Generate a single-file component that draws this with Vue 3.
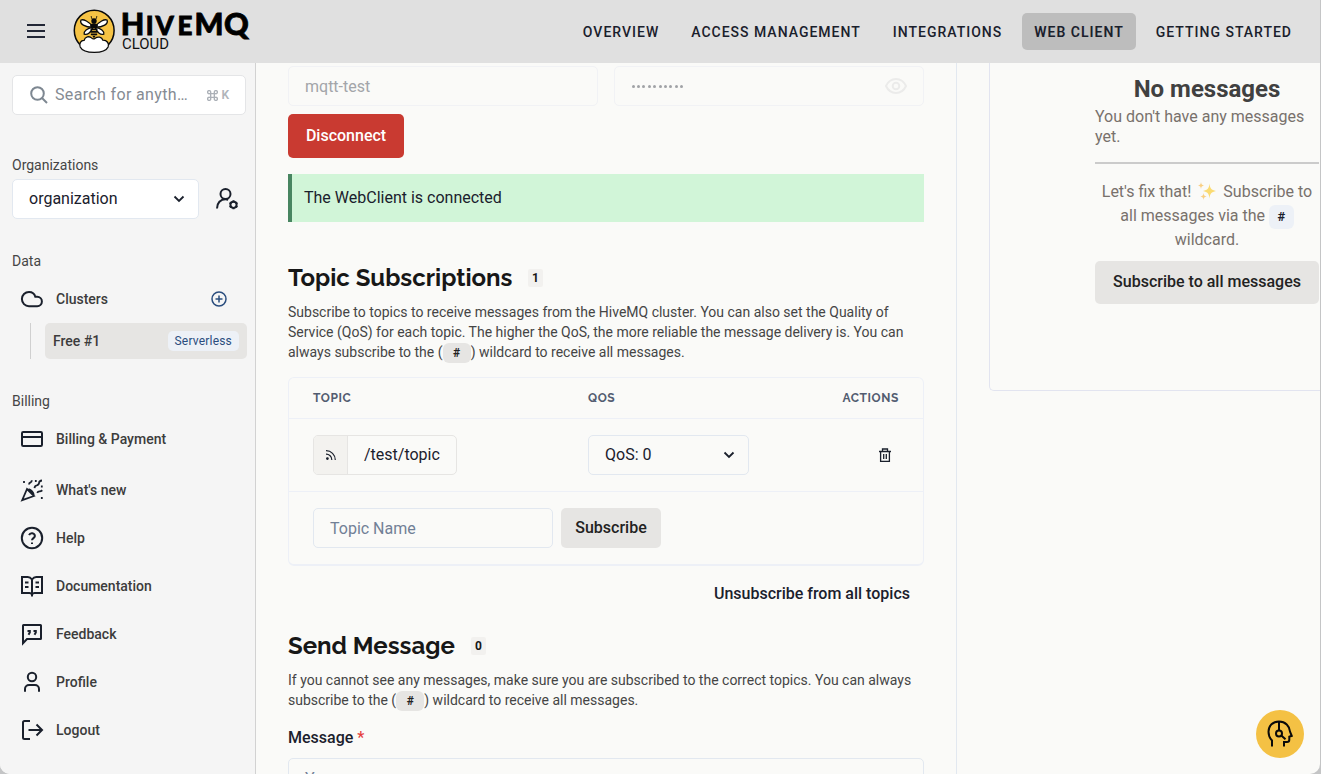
<script setup>
const nav = [
  { label: 'OVERVIEW' },
  { label: 'ACCESS MANAGEMENT' },
  { label: 'INTEGRATIONS' },
  { label: 'WEB CLIENT', active: true },
  { label: 'GETTING STARTED' },
]

const links = [
  { label: "What's new", icon: 'party' },
  { label: 'Help', icon: 'help' },
  { label: 'Documentation', icon: 'book' },
  { label: 'Feedback', icon: 'quote' },
  { label: 'Profile', icon: 'user' },
  { label: 'Logout', icon: 'logout' },
]

const icons = {
  party: 'M7 11 2.200 22.200 14 18ZM7 11l7 7M8.500 11.200c2.600 1 4.700 3.100 5.300 5.800M4 3v2M9 6.500c0-1.300.6-1.900 1.600-2.200.8-.3 1.200-.9 1.200-2M15.800 2v2M14.500 10.200c.2-1.800.9-2.700 2.300-2.900 1.500-.3 2.200-1 2.300-2.500.1-1.400.9-2.200 2.900-2.300M17.200 14.800c.6-1.200 1.300-1.500 2.500-1.400 1.200 0 1.800-.5 2.600-1.200M21.800 7.400v2M21.800 19v2',
  help: 'M9.1 9.200a3 3 0 0 1 5.800.8c0 2-2.900 2.300-2.900 4.200M12 16.500v1.600',
  book: 'M12 5.500C10.900 4 9.500 3 7.800 3H2v16h7.500c1.300 0 2 .6 2.500 1.500.5-.9 1.200-1.500 2.500-1.500H22V3h-5.800C14.500 3 13.100 4 12 5.500ZM12 5.500v17M5 8.500h3.500M5 13h3.500M15.500 8.500H19M15.500 13H19',
  quote: 'M3 21.200V3.500c0-.3.200-.5.500-.5h17c.3 0 .5.200.5.500v13c0 .3-.2.500-.5.500H7ZM7.500 9h2.300v1.500L8.500 12.800M13.500 9h2.300v1.500L14.500 12.800',
  user: 'M5 21.800V19a4 4 0 0 1 4-4h6a4 4 0 0 1 4 4v2.800',
  logout: 'M10 3H4.500C3.500 3 3 3.500 3 4.500v15c0 1 .5 1.500 1.500 1.500H10M8.500 12H22M16.500 6.500 22 12l-5.500 5.500',
}
</script>

<template>
  <div class="window">
    <header class="topbar">
      <svg class="burger" width="18" height="16" viewBox="0 0 18 16"><path d="M0 2h18M0 8h18M0 14h18" stroke="#222736" stroke-width="2" /></svg>
      <svg class="logo" width="178" height="48" viewBox="0 0 178 48">
        <ellipse cx="21.200" cy="22.500" rx="19.900" ry="20.300" fill="#f6c344" stroke="#0a0a0a" stroke-width="1.500" />
        <path d="M7.200 39c-1.300-3.500.6-6.700 3.900-6.600.8-3.700 5.300-4.800 7.700-2.300 1.200 1.200 2.200 1 3.400.1 2.500-2 6.800-1.300 7.600 2 4.200-.1 6.800 3.300 5.300 6.800-2.200 4.700-7.400 5.400-13.900 5.400s-11.900-1.200-14-5.400Z" fill="#fff" stroke="#0a0a0a" stroke-width="1.300" />
        <path d="M19.500 18.500C16 13.500 10.500 11 8 12c-1.700 4 4 7.200 11.500 7.200ZM22.500 18.500c3.500-5 9-7.500 11.500-6.500 1.700 4-4 7.200-11.500 7.200ZM19 19.600c-4.500.3-8.700 3.800-7.800 6.600 3.500 1 7-2.200 8.300-6.200ZM23 19.600c4.500.3 8.700 3.800 7.800 6.600-3.500 1-7-2.200-8.300-6.200Z" fill="#fff" stroke="#0a0a0a" stroke-width="1.300" />
        <circle cx="21" cy="13" r="2.700" fill="#0a0a0a" />
        <path d="M18.200 8.200c.2 2 1 3.300 2.200 3.800M23.800 8.200c-.2 2-1 3.300-2.200 3.800" fill="none" stroke="#0a0a0a" stroke-width="1" />
        <path d="M17 17.600c1-3.200 7-3.200 8 0-.3 1.900-1.700 2.900-4 2.900s-3.700-1-4-2.900Z" fill="#0a0a0a" />
        <path d="M17.500 21.500h7M17.300 23.900h7.400M17.800 26.300h6.400" stroke="#0a0a0a" stroke-width="1.700" />
        <path d="M19.300 27.700h3.400l-1.700 2.500Z" fill="#0a0a0a" />
        <text y="26.500" class="brand"><tspan x="47.800" font-size="30.500">H</tspan><tspan x="72.800" font-size="26">I</tspan><tspan x="82.500" font-size="26">V</tspan><tspan x="104.500" font-size="26">E</tspan><tspan x="121.500" font-size="30.500">M</tspan><tspan x="151" font-size="30.500">Q</tspan></text>
        <text x="49" y="40.500" class="cloud" textLength="47" lengthAdjust="spacingAndGlyphs">CLOUD</text>
      </svg>
      <nav class="nav">
        <a v-for="n in nav" :key="n.label" class="nav-item" :class="{ active: n.active }">{{ n.label }}</a>
      </nav>
    </header>

    <div class="body">
      <aside class="sidebar">
        <div class="search">
          <svg width="18" height="18" viewBox="0 0 18 18" fill="none" stroke="#7d8791" stroke-width="2"><circle cx="7.500" cy="7.500" r="6.300" /><path d="m12 12 5 5" /></svg>
          <span class="search-text">Search for anyth…</span>
          <svg class="cmd" width="11" height="11" viewBox="0 0 12 12" fill="none" stroke="#abb0b7" stroke-width="1.500"><path d="M4 4H2.600A1.700 1.700 0 1 1 4 2.600v6.800A1.700 1.700 0 1 1 2.600 8h6.800A1.700 1.700 0 1 1 8 9.400V2.600A1.700 1.700 0 1 1 9.400 4H4" /></svg>
          <span class="key">K</span>
        </div>

        <div class="label org-label">Organizations</div>
        <div class="org-row">
          <div class="select org">
            <span>organization</span>
            <svg width="12" height="8" viewBox="0 0 12 8" fill="none" stroke="#1a202c" stroke-width="1.800"><path d="m1.500 1.500 4.500 4.500 4.500-4.500" /></svg>
          </div>
          <svg class="user-cog" width="24" height="24" viewBox="0 0 24 24" fill="none" stroke="#1a202c" stroke-width="2">
            <circle cx="10.500" cy="7" r="5" /><path d="M2 21.500c0-5.600 3.500-9.300 8.500-9.300 1 0 1.900.2 2.700.5" />
            <circle cx="18.500" cy="17.800" r="3.100" /><path d="M18.500 13.300v2M18.500 20.300v2M14.600 15.550l1.700 1M20.700 19.050l1.700 1M14.600 20.050l1.700-1M20.700 16.550l1.700-1" />
          </svg>
        </div>

        <div class="label data-label">Data</div>
        <div class="item clusters">
          <svg class="ico" viewBox="0 0 24 24"><path d="M9 5a6.500 6.500 0 0 1 6.300 4.800h1.900a4.700 4.700 0 0 1 0 9.400H9A7.100 7.100 0 0 1 9 5Z" /></svg>
          <span>Clusters</span>
          <svg class="plus" width="16" height="16" viewBox="0 0 16 16" fill="none" stroke="#2a4d7e" stroke-width="1.500"><circle cx="8" cy="8" r="7" /><path d="M8 4.500v7M4.500 8h7" /></svg>
        </div>
        <div class="tree">
          <div class="cluster"><span>Free #1</span><span class="badge">Serverless</span></div>
        </div>

        <div class="label billing-label">Billing</div>
        <div class="item billing">
          <svg class="ico" viewBox="0 0 24 24"><rect x="2" y="5" width="20" height="14" rx="1.200" /><path d="M2 10h20" /></svg>
          <span>Billing &amp; Payment</span>
        </div>
        <div v-for="l in links" :key="l.label" class="item">
          <svg class="ico" :class="l.icon" viewBox="0 0 24 24">
            <circle v-if="l.icon === 'help'" cx="12" cy="12" r="10.200" />
            <circle v-if="l.icon === 'user'" cx="12" cy="7" r="4.200" />
            <path :d="icons[l.icon]" />
          </svg>
          <span>{{ l.label }}</span>
        </div>
      </aside>

      <main class="main">
        <div class="creds">
          <div class="field">mqtt-test</div>
          <div class="field">
            <span class="dots"><i v-for="d in 10" :key="d"></i></span>
            <svg width="24" height="24" viewBox="0 0 24 24" fill="none" stroke="#ebebea" stroke-width="2"><path d="M2 12c2-4.300 5.800-7 10-7s8 2.700 10 7c-2 4.300-5.800 7-10 7s-8-2.700-10-7Z" /><circle cx="12" cy="12" r="3.300" /></svg>
          </div>
        </div>
        <button class="btn danger">Disconnect</button>
        <div class="alert">The WebClient is connected</div>

        <h2 class="title subs"><span class="title-a">Topic Subscriptions</span><span class="count">1</span></h2>
        <p class="desc">Subscribe to topics to receive messages from the HiveMQ cluster. You can also set the Quality of<br>Service (QoS) for each topic. The higher the QoS, the more reliable the message delivery is. You can<br>always subscribe to the (<code class="hash">#</code>) wildcard to receive all messages.</p>

        <div class="table">
          <div class="row head"><span>TOPIC</span><span>QOS</span><span class="end">ACTIONS</span></div>
          <div class="row topic-row">
            <div class="topic">
              <span class="rss"><svg width="10" height="10" viewBox="0 0 10 10" fill="none" stroke="#1a202c" stroke-width="1.200"><path d="M0 .7a9.200 9.200 0 0 1 9.300 9.200M0 4.200a5.600 5.600 0 0 1 5.800 5.700" /><circle cx="1.400" cy="8.600" r=".8" fill="#1a202c" /></svg></span>
              <span class="topic-name">/test/topic</span>
            </div>
            <div class="select qos">
              <span>QoS: 0</span>
              <svg width="12" height="8" viewBox="0 0 12 8" fill="none" stroke="#1a202c" stroke-width="1.800"><path d="m1.500 1.500 4.500 4.500 4.500-4.500" /></svg>
            </div>
            <svg class="trash" width="12" height="14" viewBox="0 0 12 14" fill="none" stroke="#1a202c" stroke-width="1.300"><path d="M0 3.500h12M3.500 3.300V1h5v2.300M1.600 3.500v9.800h8.800V3.500M4.700 6v5M7.300 6v5" /></svg>
          </div>
          <div class="row new-row">
            <div class="input">Topic Name</div>
            <button class="btn grey">Subscribe</button>
          </div>
        </div>
        <div class="unsub">Unsubscribe from all topics</div>

        <h2 class="title send"><span class="title-b">Send Message</span><span class="count">0</span></h2>
        <p class="desc">If you cannot see any messages, make sure you are subscribed to the correct topics. You can always<br>subscribe to the (<code class="hash">#</code>) wildcard to receive all messages.</p>
        <div class="msg-label">Message <span class="req">*</span></div>
        <div class="textarea">Your message</div>
      </main>

      <section class="messages">
        <div class="card">
          <div class="empty">
            <h3>No messages</h3>
            <p class="none">You don't have any messages yet.</p>
            <hr>
            <p class="fix">Let's fix that! <svg width="20" height="20" viewBox="0 0 20 20" fill="#fadb72"><path d="M12.500 2.500c.6 5 1.700 6.500 6.500 7.500-4.800 1-5.900 2.500-6.500 7.500-.6-5-1.700-6.500-6.500-7.500 4.800-1 5.900-2.500 6.500-7.500Z" /><path d="M4 1c.3 2.200.8 3 3 3.500-2.200.5-2.700 1.300-3 3.500-.3-2.200-.8-3-3-3.500C3.200 4 3.700 3.200 4 1ZM6.500 12c.3 2.200.8 3 3 3.500-2.200.5-2.700 1.300-3 3.500-.3-2.200-.8-3-3-3.500 2.200-.5 2.700-1.300 3-3.500Z" fill="#f9cf82" /></svg> Subscribe to<br>all messages via the <code class="hash blue">#</code><br>wildcard.</p>
            <button class="btn grey wide">Subscribe to all messages</button>
          </div>
        </div>
      </section>
    </div>

    <button class="support" aria-label="Support">
      <svg width="26" height="28" viewBox="0 0 26 28" fill="none" stroke="#0a0a0a" stroke-width="2"><path d="M5 26.500v-6C2.500 18 1.500 15 1.500 11.800 1.500 5.500 6 1.500 12 1.500c6.500 0 10.500 4.500 11 10l1.700 4.300-2.400.9v3c0 1.700-.8 2.300-2.300 2.300h-3v4.500M12 1.500v9M14.300 15.500l4.200 3.700" /><circle cx="12" cy="13.500" r="3" /></svg>
    </button>
  </div>
</template>

<style>
html,
body {
  margin: 0;
  background: #c4c5c6;
}
</style>

<style scoped>
.window,
.window * {
  box-sizing: border-box;
}
.window {
  position: relative;
  width: 1320px;
  height: 774px;
  overflow: hidden;
  border-radius: 0 0 10px 10px;
  background: #fafaf8;
  font-family: Roboto, 'Liberation Sans', sans-serif;
  font-size: 16px;
  color: #1a202c;
}
.topbar {
  height: 63px;
  background: #e0e0e0;
  display: flex;
  align-items: center;
  padding: 0 16px 0 27px;
}
.burger { flex: none; margin-top: -1px; }
.logo { margin: 0 0 0 28px; flex: none; }
.brand {
  font-family: Lato, sans-serif;
  font-weight: 900;
  fill: #000;
  stroke: #000;
  stroke-width: 0.8;
}
.cloud { font-size: 15.5px; fill: #111; }
.nav {
  margin-left: auto;
  display: flex;
  gap: 8px;
}
.nav-item {
  height: 37px;
  line-height: 38px;
  padding: 0 12px;
  border-radius: 5px;
  font-size: 14px;
  font-weight: 500;
  letter-spacing: 1px;
  white-space: nowrap;
}
.nav-item.active { background: #bdbdbd; font-weight: 600; }
.body { display: flex; height: 711px; }
.sidebar {
  width: 256px;
  flex: none;
  border-right: 1px solid #d2d2d2;
  background: #f5f5f5;
  padding: 12px 8px 0 12px;
}
.search {
  width: 234px;
  height: 40px;
  border: 1px solid #e4e5e7;
  border-radius: 5px;
  background: #fff;
  display: flex;
  align-items: center;
  padding: 0 16px 1px 17px;
  color: #858b93;
}
.search-text { margin-left: 7px; flex: 1; white-space: nowrap; letter-spacing: 0.35px; }
.cmd { margin: 1px 3px 0 0; }
.key { margin-top: 1px; font-size: 12px; font-weight: 600; color: #b0b4ba; }
.label { font-size: 14px; line-height: 21px; height: 20px; color: #454545; }
.org-label { margin-top: 40px; }
.org-row { margin-top: 4px; display: flex; align-items: center; }
.select {
  height: 40px;
  border: 1px solid #e2e8f0;
  border-radius: 5px;
  display: flex;
  align-items: center;
  justify-content: space-between;
  padding: 0 13px 0 16px;
}
.select span { margin-top: -1px; }
.org { width: 187px; background: #fff; }
.user-cog { margin-left: 16px; }
.data-label { margin-top: 32px; }
.item {
  height: 48px;
  padding-left: 8px;
  display: flex;
  align-items: center;
  font-size: 14px;
  font-weight: 500;
  color: #3c3c3c;
}
.ico {
  width: 24px;
  height: 24px;
  margin-right: 12px;
  fill: none;
  stroke: #1a202c;
  stroke-width: 2;
}
.ico.party { stroke-width: 1.8; }
.clusters { margin-top: 4px; }
.plus { margin: 0 20px 0 auto; }
.tree {
  margin-left: 18px;
  border-left: 1px solid #d0d0d0;
  padding-left: 14px;
}
.cluster {
  height: 36px;
  width: 202px;
  background: #e6e5e3;
  border-radius: 5px;
  display: flex;
  align-items: center;
  justify-content: space-between;
  padding: 0 8px;
  font-size: 14px;
  font-weight: 500;
  color: #3c3c3c;
}
.badge {
  height: 20px;
  line-height: 20px;
  padding: 0 7px;
  border-radius: 5px;
  background: #edf1f7;
  color: #2a4d7e;
  font-size: 12px;
  font-weight: 400;
  letter-spacing: 0.2px;
}
.billing-label { margin-top: 32px; }
.billing { margin: 4px 0 3px; }
.main {
  width: 701px;
  flex: none;
  border-right: 1px solid #e2e8f0;
  padding: 3px 32px 0;
  overflow: hidden;
}
.creds { display: flex; gap: 16px; }
.field {
  width: 310px;
  height: 40px;
  border: 1px solid #f1f2f5;
  border-radius: 5px;
  padding: 0 15px 0 16px;
  display: flex;
  align-items: center;
  justify-content: space-between;
  color: #a3a5a9;
}
.dots { display: flex; gap: 2.400px; margin-left: 0.600px; }
.dots i { width: 3px; height: 3px; border-radius: 50%; background: #a0a2a6; }
.btn {
  display: block;
  border: 0;
  border-radius: 5px;
  font-family: inherit;
  font-size: 16px;
  font-weight: 500;
  padding: 0 0 2px;
  text-align: center;
  white-space: nowrap;
}
.danger {
  margin-top: 8px;
  width: 116px;
  height: 44px;
  background: #c93a31;
  color: #fff;
}
.alert {
  margin-top: 16px;
  height: 48px;
  line-height: 48px;
  background: #d1f5d8;
  border-left: 4px solid #488561;
  padding-left: 12px;
}
.title {
  margin: 0;
  height: 32px;
  display: flex;
  align-items: center;
  font-family: Raleway, Lato, sans-serif;
  font-size: 24px;
  font-weight: 700;
  color: #171717;
  white-space: nowrap;
}
.subs { margin-top: 40px; }
.title-a { width: 240px; margin-top: -2px; }
.title-b { width: 183px; margin-top: -2px; }
.count {
  width: 15px;
  height: 18px;
  line-height: 18px;
  text-align: center;
  border-radius: 2px;
  background: #f2f1ef;
  font-family: Roboto, sans-serif;
  font-size: 12px;
}
.desc {
  margin: 8px 0 0;
  font-size: 14px;
  line-height: 20px;
  color: #454545;
  white-space: nowrap;
}
.hash {
  font-family: Roboto, sans-serif;
  font-size: 12px;
  font-weight: 700;
  line-height: 1;
  color: #222;
  background: #e6e5e3;
  border-radius: 6px;
  padding: 3px 10.5px;
}
.hash.blue {
  background: #edf1f7;
  padding: 4px 8.5px 5px;
  color: #1a202c;
  font-size: 13px;
  vertical-align: 0.5px;
}
.table {
  margin-top: 15px;
  height: 189px;
  border: 1px solid #edf0f7;
  border-bottom-width: 2px;
  border-radius: 6px;
}
.row { display: flex; align-items: center; padding: 0 24px; }
.row + .row { border-top: 1px solid #edf0f7; }
.head {
  height: 40px;
  font-family: Raleway, 'Noto Sans', sans-serif;
  font-size: 12px;
  font-weight: 700;
  letter-spacing: 0.6px;
  color: #525c70;
}
.head span { width: 275px; flex: none; margin-top: -1px; }
.head span:nth-child(2) { width: 80px; }
.head .end { width: auto; margin-left: auto; }
.topic-row { height: 73px; }
.topic {
  display: flex;
  width: 144px;
  height: 40px;
  border: 1px solid #e6e5e3;
  border-radius: 5px;
  overflow: hidden;
}
.rss {
  width: 34px;
  background: #f3f2ef;
  border-right: 1px solid #e6e5e3;
  display: flex;
  align-items: center;
  justify-content: center;
}
.topic-name { line-height: 38px; padding-left: 16px; }
.qos { width: 161px; margin-left: 131px; }
.trash { margin: 0 8px 0 auto; }
.new-row { height: 73px; }
.input {
  width: 240px;
  height: 40px;
  line-height: 40px;
  border: 1px solid #e2e8f0;
  border-radius: 5px;
  padding-left: 16px;
  color: #718096;
}
.grey { background: #e6e5e3; color: #222; width: 100px; height: 40px; margin-left: 8px; }
.unsub {
  margin-top: 16px;
  line-height: 24px;
  padding-right: 14px;
  text-align: right;
  font-weight: 500;
}
.send { margin-top: 24px; }
.msg-label { margin-top: 16px; line-height: 24px; font-weight: 500; }
.req { color: #e53e3e; }
.textarea {
  margin-top: 8px;
  height: 80px;
  border: 1px solid #e2e8f0;
  border-radius: 5px;
  padding: 8px 16px;
  line-height: 24px;
  color: #718096;
}
.messages { flex: 1; min-width: 0; padding-left: 32px; }
.card {
  height: 328px;
  border: 1px solid #e2e4f0;
  border-width: 0 0 1px 1px;
  border-radius: 0 0 0 5px;
  padding: 12px 1px 0 105px;
}
.empty { width: 224px; }
.empty h3 {
  margin: 0;
  text-align: center;
  font-size: 24px;
  line-height: 28px;
  color: #404040;
}
.empty p { margin: 0; color: #78716c; }
.empty .none { line-height: 20px; margin-top: 4px; }
.empty hr { border: 0; height: 2px; background: #cbcbcb; margin: 15px 0 16px; }
.empty .fix { text-align: center; line-height: 24px; height: 72px; white-space: nowrap; }
.fix svg { vertical-align: -4px; margin: 0 2px; }
.wide { margin: 9px 0 0; width: 224px; height: 43px; }
.support {
  position: absolute;
  left: 1256px;
  top: 710px;
  width: 48px;
  height: 48px;
  border: 0;
  border-radius: 50%;
  padding: 0;
  background: #f4c144;
  display: flex;
  align-items: center;
  justify-content: center;
}
</style>
